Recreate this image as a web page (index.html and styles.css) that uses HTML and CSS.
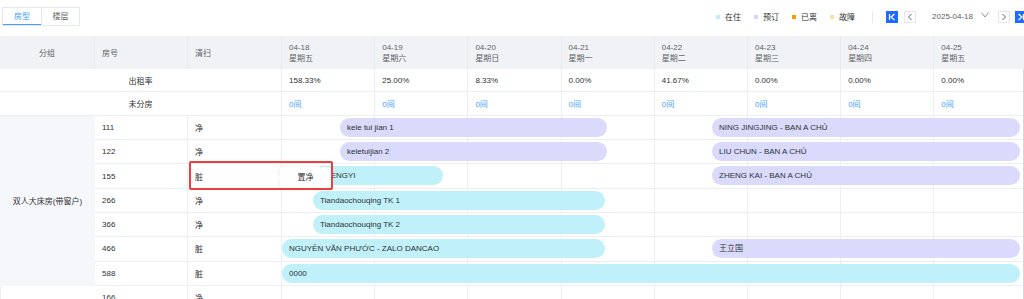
FILE: index.html
```html
<!DOCTYPE html>
<html lang="zh-CN">
  <head>
    <meta charset="UTF-8" />
    <meta name="viewport" content="width=device-width, initial-scale=1.0" />
    <title>房态图</title>
    <link rel="stylesheet" href="styles.css">
  </head>
  <body>
    <div class="page">
      <!-- top bar: tabs + legend + date switcher -->
      <div class="toolbar">
        <div class="tabs">
          <span class="tab active">房型</span>
          <span class="tab">楼层</span>
        </div>
        <div class="controls">
          <span class="legend"><i class="sq stay"></i>在住</span>
          <span class="legend"><i class="sq book"></i>预订</span>
          <span class="legend"><i class="sq left"></i>已离</span>
          <span class="legend"><i class="sq broken"></i>故障</span>
          <span class="sep"></span>
          <button class="nav solid">
            <svg width="8" height="8" viewBox="0 0 8 8"><path d="M1.5 1v6M6.5 1 3 4l3.5 3" fill="none" stroke="#fff" stroke-width="1.2"/></svg>
          </button>
          <button class="nav">
            <svg width="8" height="8" viewBox="0 0 8 8"><path d="M5.5 1 2.5 4l3 3" fill="none" stroke="#606266" stroke-width="1"/></svg>
          </button>
          <span class="date">2025-04-18</span>
          <svg class="caret" width="8" height="6" viewBox="0 0 8 6"><path d="M.5.5 4 5 7.5.5" fill="none" stroke="#909399" stroke-width="1"/></svg>
          <button class="nav">
            <svg width="8" height="8" viewBox="0 0 8 8"><path d="M2.5 1l3 3-3 3" fill="none" stroke="#606266" stroke-width="1"/></svg>
          </button>
          <button class="nav solid">
            <svg width="8" height="8" viewBox="0 0 8 8"><path d="M6.5 1v6M1.5 1 5 4 1.5 7" fill="none" stroke="#fff" stroke-width="1.2"/></svg>
          </button>
        </div>
      </div>

      <!-- header -->
      <div class="head">
        <div class="hcell center">分组</div>
        <div class="hcell">房号</div>
        <div class="hcell">清扫</div>
        <div class="hcell date-cell"><span>04-18</span><span>星期五</span></div>
        <div class="hcell date-cell"><span>04-19</span><span>星期六</span></div>
        <div class="hcell date-cell"><span>04-20</span><span>星期日</span></div>
        <div class="hcell date-cell"><span>04-21</span><span>星期一</span></div>
        <div class="hcell date-cell"><span>04-22</span><span>星期二</span></div>
        <div class="hcell date-cell"><span>04-23</span><span>星期三</span></div>
        <div class="hcell date-cell"><span>04-24</span><span>星期四</span></div>
        <div class="hcell date-cell"><span>04-25</span><span>星期五</span></div>
      </div>

      <div class="body">
        <div class="sum-row">
          <div class="sum-label">出租率</div>
          <div class="day">158.33%</div>
          <div class="day">25.00%</div>
          <div class="day">8.33%</div>
          <div class="day">0.00%</div>
          <div class="day">41.67%</div>
          <div class="day">0.00%</div>
          <div class="day">0.00%</div>
          <div class="day">0.00%</div>
        </div>
        <div class="sum-row">
          <div class="sum-label">未分房</div>
          <div class="day link">0间</div>
          <div class="day link">0间</div>
          <div class="day link">0间</div>
          <div class="day link">0间</div>
          <div class="day link">0间</div>
          <div class="day link">0间</div>
          <div class="day link">0间</div>
          <div class="day link">0间</div>
        </div>

        <div class="group">
          <div class="group-name">双人大床房(带窗户)</div>
          <div class="rooms">
            <div class="room">
              <div class="cell">111</div>
              <div class="cell">净</div>
              <div class="days">
                <i></i><i></i><i></i><i></i><i></i><i></i><i></i><i></i>
                <div class="bar booked" style="left:58px;width:267px">kele tui jian 1</div>
                <div class="bar booked" style="left:430px;width:308px">NING JINGJING - BẠN A CHỦ</div>
              </div>
            </div>
            <div class="room">
              <div class="cell">122</div>
              <div class="cell">净</div>
              <div class="days">
                <i></i><i></i><i></i><i></i><i></i><i></i><i></i><i></i>
                <div class="bar booked" style="left:58px;width:267px">keletuijian 2</div>
                <div class="bar booked" style="left:430px;width:308px">LIU CHUN - BẠN A CHỦ</div>
              </div>
            </div>
            <div class="room marked">
              <div class="cell">155</div>
              <div class="cell">脏</div>
              <div class="days">
                <i></i><i></i><i></i><i></i><i></i><i></i><i></i><i></i>
                <div class="bar staying" style="left:31px;width:130px">ZHENGYI</div>
                <div class="bar booked" style="left:430px;width:308px">ZHENG KAI - BẠN A CHỦ</div>
              </div>
              <div class="frame"></div>
              <div class="tip">置净</div>
            </div>
            <div class="room">
              <div class="cell">266</div>
              <div class="cell">净</div>
              <div class="days">
                <i></i><i></i><i></i><i></i><i></i><i></i><i></i><i></i>
                <div class="bar staying" style="left:31px;width:292px">Tiandaochouqing TK 1</div>
              </div>
            </div>
            <div class="room">
              <div class="cell">366</div>
              <div class="cell">净</div>
              <div class="days">
                <i></i><i></i><i></i><i></i><i></i><i></i><i></i><i></i>
                <div class="bar staying" style="left:31px;width:292px">Tiandaochouqing TK 2</div>
              </div>
            </div>
            <div class="room">
              <div class="cell">466</div>
              <div class="cell">脏</div>
              <div class="days">
                <i></i><i></i><i></i><i></i><i></i><i></i><i></i><i></i>
                <div class="bar staying" style="left:0;width:323px">NGUYỄN VĂN PHƯỚC - ZALO DANCAO</div>
                <div class="bar booked" style="left:430px;width:308px">王立国</div>
              </div>
            </div>
            <div class="room">
              <div class="cell">588</div>
              <div class="cell">脏</div>
              <div class="days">
                <i></i><i></i><i></i><i></i><i></i><i></i><i></i><i></i>
                <div class="bar staying" style="left:0;width:738px">0000</div>
              </div>
            </div>
          </div>
        </div>

        <div class="group plain">
          <div class="group-name"></div>
          <div class="rooms">
            <div class="room">
              <div class="cell">166</div>
              <div class="cell">净</div>
              <div class="days">
                <i></i><i></i><i></i><i></i><i></i><i></i><i></i><i></i>
              </div>
            </div>
          </div>
        </div>
      </div>
    </div>
  </body>
</html>
```

FILE: styles.css
```css
body {
  margin: 0;
  font-family: "Liberation Sans", "Noto Sans CJK SC", sans-serif;
  font-size: 8px;
  color: #606266;
  background-color: #fff;
  overflow: hidden;
}
.page {
  width: 1030px;
}

/* toolbar */
.toolbar {
  height: 36px;
  display: flex;
  justify-content: space-between;
  align-items: flex-start;
  padding: 7px 0 0 2px;
  margin-right: -3px;
  box-sizing: border-box;
}
.tabs {
  display: flex;
  border: 1px solid #e4e7ed;
  height: 19px;
  box-sizing: border-box;
}
.tab {
  width: 38px;
  text-align: center;
  line-height: 17px;
  color: #606266;
  box-sizing: border-box;
}
.tab + .tab {
  border-left: 1px solid #e4e7ed;
}
.tab.active {
  color: #409eff;
  border-bottom: 1px solid #409eff;
}
.controls {
  display: flex;
  align-items: center;
  height: 19px;
  color: #303133;
}
.legend {
  display: flex;
  align-items: center;
  margin-right: 13px;
}
.legend:nth-of-type(4) {
  margin-right: 17px;
}
.sq {
  width: 4px;
  height: 4px;
  margin-right: 5px;
}
.sq.stay { background-color: #bdeef9; }
.sq.book { background-color: #d6d8fb; }
.sq.left { background-color: #f5a000; }
.sq.broken { background-color: #fde0a6; }
.sep {
  width: 1px;
  height: 12px;
  background-color: #e4e7ed;
  margin: 0 13px 0 0;
}
.nav {
  width: 12px;
  height: 12px;
  padding: 0;
  border: 1px solid #e4e7ed;
  background-color: #fff;
  display: flex;
  align-items: center;
  justify-content: center;
  margin-right: 6px;
  box-sizing: border-box;
}
.nav.solid {
  background-color: #1f6bff;
  border-color: #1f6bff;
}
.date {
  margin-left: 10px;
  color: #606266;
}
.caret {
  margin: -4px 9px 0 8px;
}
.caret + .nav {
  margin-right: 5px;
}

/* header */
.head {
  display: grid;
  grid-template-columns: 95px 93px 94px repeat(8, 93.2px);
  height: 33px;
  background-color: #f0f2f5;
}
.hcell {
  display: flex;
  align-items: center;
  padding-left: 7px;
  border-right: 1px solid #e8eaee;
  color: #606266;
}
.hcell.center {
  justify-content: center;
  padding-left: 0;
}
.date-cell {
  flex-direction: column;
  align-items: flex-start;
  justify-content: center;
  line-height: 11px;
}

/* body */
.body {
  width: 1023px;
  overflow: hidden;
  border-right: 1px solid #d4d7de;
}
.sum-row {
  display: grid;
  grid-template-columns: 282px repeat(8, 93.2px);
  height: 23.4px;
  border-bottom: 1px solid #ebeef5;
  box-sizing: border-box;
}
.sum-label {
  display: flex;
  align-items: center;
  justify-content: center;
  color: #303133;
  border-right: 1px solid #ebeef5;
}
.day {
  display: flex;
  align-items: center;
  padding-left: 7px;
  border-right: 1px solid #ebeef5;
  color: #303133;
}
.day.link {
  color: #409eff;
}

.group {
  display: flex;
}
.group-name {
  width: 95px;
  flex-shrink: 0;
  background-color: #f5f7fa;
  display: flex;
  align-items: center;
  justify-content: center;
  color: #303133;
}
.group.plain .group-name {
  background-color: #fff;
  border-left: 1px solid #ebeef5;
  box-sizing: border-box;
}
.rooms {
  flex: 1;
}
.room {
  position: relative;
  display: grid;
  grid-template-columns: 93px 94px 1fr;
  height: 24.3px;
  border-bottom: 1px solid #ebeef5;
  box-sizing: border-box;
}
.cell {
  display: flex;
  align-items: center;
  padding-left: 7px;
  border-right: 1px solid #ebeef5;
  color: #303133;
}
.days {
  position: relative;
  display: grid;
  grid-template-columns: repeat(8, 93.2px);
}
.days i {
  border-right: 1px solid #ebeef5;
}
.bar {
  position: absolute;
  top: 2px;
  height: 19px;
  line-height: 19px;
  border-radius: 10px;
  padding-left: 7px;
  box-sizing: border-box;
  white-space: nowrap;
  overflow: hidden;
  color: #303133;
}
.bar.booked {
  background-color: #d9dafc;
}
.bar.staying {
  background-color: #c0f0f9;
}

/* red annotation around the dirty room and its action popup */
.frame {
  position: absolute;
  left: 94px;
  top: -3px;
  width: 144px;
  height: 29px;
  border: 2px solid #ea3f3a;
  box-sizing: border-box;
  border-radius: 2px;
  z-index: 3;
}
.tip {
  position: absolute;
  left: 185px;
  top: 3px;
  width: 51px;
  height: 21px;
  line-height: 21px;
  text-align: center;
  background-color: #fff;
  border-radius: 3px;
  box-shadow: 0 1px 4px rgba(0, 0, 0, 0.12);
  color: #303133;
  z-index: 2;
}
.tip::before {
  content: "";
  position: absolute;
  left: -3px;
  top: 8px;
  border-top: 3px solid transparent;
  border-bottom: 3px solid transparent;
  border-right: 3px solid #fff;
}
```
